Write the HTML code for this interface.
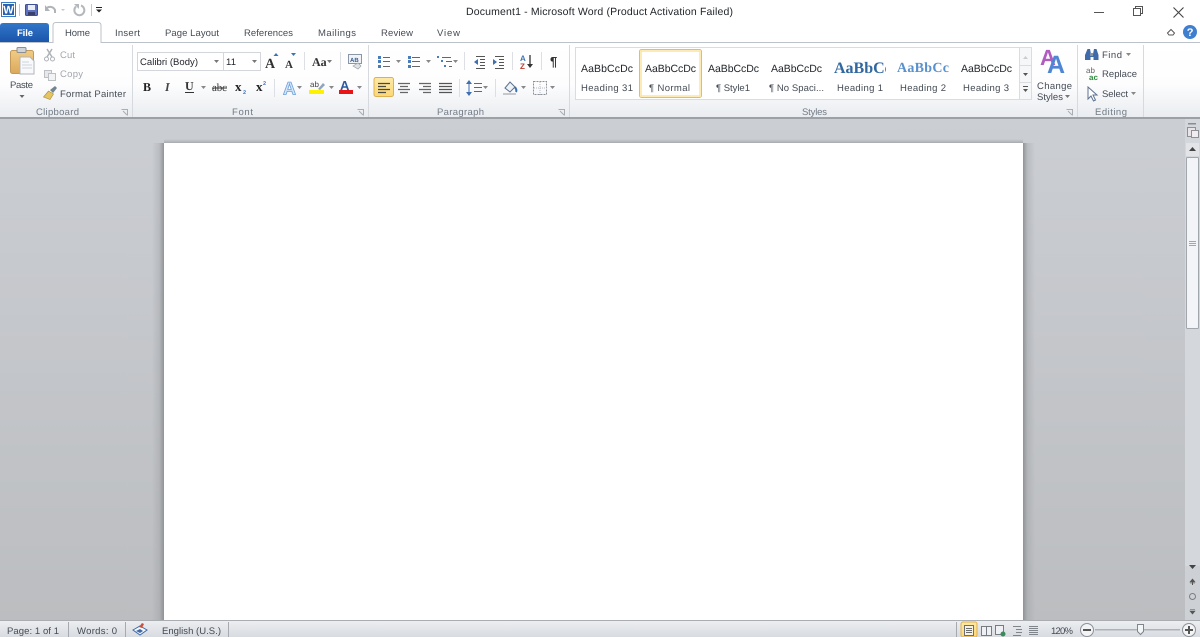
<!DOCTYPE html>
<html lang="en"><head><meta charset="utf-8"><title>Document1 - Microsoft Word</title>
<style>
html,body{margin:0;padding:0;width:1200px;height:637px;overflow:hidden;background:#fff}
svg{display:block;position:absolute;left:0;top:0;filter:blur(.35px)}
text{font-family:"Liberation Sans",sans-serif;font-size:9.5px;fill:#444b54;text-rendering:geometricPrecision}
.g{fill:#727b86}.l{fill:#a3a8ae}.k{fill:#22262b}
</style></head><body>
<svg width="1200" height="637" viewBox="0 0 1200 637" xmlns="http://www.w3.org/2000/svg">
<defs>
<linearGradient id="rib" x1="0" y1="0" x2="0" y2="1"><stop offset="0" stop-color="#fff"/><stop offset=".55" stop-color="#fdfdfe"/><stop offset="1" stop-color="#e9ecf0"/></linearGradient>
<linearGradient id="bg" x1="0" y1="0" x2="0" y2="1"><stop offset="0" stop-color="#cbced3"/><stop offset="1" stop-color="#bbbdc0"/></linearGradient>
<linearGradient id="file" x1="0" y1="0" x2="0" y2="1"><stop offset="0" stop-color="#3276c8"/><stop offset="1" stop-color="#1a55ab"/></linearGradient>
<linearGradient id="st" x1="0" y1="0" x2="0" y2="1"><stop offset="0" stop-color="#eceef1"/><stop offset="1" stop-color="#d8dbe0"/></linearGradient>
<linearGradient id="sel" x1="0" y1="0" x2="0" y2="1"><stop offset="0" stop-color="#fde9a8"/><stop offset="1" stop-color="#fbd776"/></linearGradient>
<linearGradient id="clip" x1="0" y1="0" x2="0" y2="1"><stop offset="0" stop-color="#f0cb86"/><stop offset="1" stop-color="#dba95a"/></linearGradient>
<linearGradient id="shL" x1="0" y1="0" x2="1" y2="0"><stop offset="0" stop-color="#8f9296" stop-opacity="0"/><stop offset=".6" stop-color="#94979a" stop-opacity=".3"/><stop offset="1" stop-color="#8d9093" stop-opacity=".95"/></linearGradient>
<linearGradient id="shR" x1="0" y1="0" x2="1" y2="0"><stop offset="0" stop-color="#8d9093" stop-opacity=".95"/><stop offset=".4" stop-color="#94979a" stop-opacity=".3"/><stop offset="1" stop-color="#8f9296" stop-opacity="0"/></linearGradient>
<linearGradient id="shT" x1="0" y1="0" x2="0" y2="1"><stop offset="0" stop-color="#8f9296" stop-opacity="0"/><stop offset="1" stop-color="#85888c" stop-opacity=".5"/></linearGradient>
<clipPath id="h1c"><rect x="830" y="55" width="56" height="24"/></clipPath>
</defs>

<!-- backgrounds -->
<rect width="1200" height="637" fill="#fff"/>
<rect y="118" width="1200" height="503" fill="url(#bg)"/>
<rect y="43" width="1200" height="74" fill="url(#rib)"/>
<rect y="42" width="1200" height="1" fill="#bcc2c9"/>
<rect y="117" width="1200" height="2" fill="#9da1a6"/>

<!-- page -->
<rect x="152" y="143" width="12" height="478" fill="url(#shL)"/>
<rect x="1023" y="143" width="12" height="478" fill="url(#shR)"/>
<rect x="164" y="139" width="859" height="4" fill="url(#shT)"/>
<rect x="164" y="143" width="859" height="478" fill="#fff"/>

<!-- QAT -->
<rect x="1.500" y="2.500" width="14" height="14" fill="#fff" stroke="#3a7cc4"/>
<rect x="3" y="4" width="11" height="11" fill="#2a62ad"/>
<text x="3.300" y="13.500" style="font-size:11px;font-weight:bold;fill:#fff">W</text>
<rect x="19" y="4" width="1" height="12" fill="#c5c9cf"/>
<rect x="25.500" y="4.500" width="12" height="11" rx="1" fill="#5f72c0" stroke="#3f4f96"/>
<rect x="28" y="5" width="7" height="5" fill="#e8edf6"/><rect x="28" y="12" width="7" height="3" fill="#39406e"/>
<path d="M46 9c2-3 7-3 9 1l0 3" fill="none" stroke="#b0b4b9" stroke-width="2"/><path d="M45 5v6h5z" fill="#b0b4b9"/>
<path d="M61 9l4 0-2 2z" fill="#c3c6ca"/>
<path d="M81 5.500a5 5 0 1 1-5 1" fill="none" stroke="#b4b8bc" stroke-width="2"/><path d="M74 4h5v5z" fill="#b4b8bc"/>
<rect x="91" y="4" width="1" height="12" fill="#c5c9cf"/>
<rect x="96" y="7" width="6" height="1" fill="#222"/><path d="M96 9.500h6l-3 3z" fill="#222"/>
<text x="466" y="15" class="k" style="font-size:10.500px" textLength="267">Document1 - Microsoft Word (Product Activation Failed)</text>

<!-- window buttons -->
<rect x="1094" y="12" width="10" height="1" fill="#555"/>
<path d="M1135.500 8.500v-2h7v7h-2M1133.500 8.500h7v7h-7z" fill="none" stroke="#555"/>
<path d="M1173.500 7.500l10 10M1183.500 7.500l-10 10" fill="none" stroke="#444" stroke-width="1.100"/>
<path d="M1167.500 33l3.500-3.500 3.500 3.500-1.500 2h-4z" fill="none" stroke="#555" stroke-width="1"/>
<circle cx="1190" cy="32" r="7" fill="#3f7fd0"/><text x="1186.700" y="36" style="font-size:11px;font-weight:bold;fill:#fff">?</text>

<!-- tabs -->
<path d="M0 42V26q0-3 3-3h43q3 0 3 3v16z" fill="url(#file)"/>
<text x="17" y="36" style="font-weight:bold;fill:#fff" textLength="16">File</text>
<path d="M53 43V25.500q0-3 3-3h42q3 0 3 3V43" fill="#fff" stroke="#bcc2c9"/>
<text x="65" y="36" textLength="25">Home</text>
<text x="115" y="36" textLength="25">Insert</text>
<text x="165" y="36" textLength="54">Page Layout</text>
<text x="244" y="36" textLength="49">References</text>
<text x="318" y="36" textLength="38">Mailings</text>
<text x="381" y="36" textLength="32">Review</text>
<text x="437" y="36" textLength="23">View</text>

<!-- group separators -->
<g fill="#d6d9de">
<rect x="132" y="45" width="1" height="72"/><rect x="368" y="45" width="1" height="72"/><rect x="569" y="45" width="1" height="72"/><rect x="1077" y="45" width="1" height="72"/><rect x="1143" y="45" width="1" height="72"/>
</g>

<!-- clipboard -->
<rect x="10.500" y="50.500" width="23" height="23" rx="2" fill="url(#clip)" stroke="#c39a58"/>
<rect x="17" y="47.500" width="9" height="5" rx="1" fill="#d0d4d9" stroke="#8a8f96"/>
<path d="M20 57h10l4 4v13H20z" fill="#f7f9fb" stroke="#b0b5bb"/>
<path d="M22 62h7M22 65h10M22 68h10" stroke="#cfd3d8"/>
<text x="10" y="88" textLength="23">Paste</text>
<path d="M19.500 95h5l-2.500 3z" fill="#666"/>
<path d="M47 49l5 8M52 49l-5 8" stroke="#aeb2b7" stroke-width="1.500"/><circle cx="46.500" cy="59" r="2" fill="none" stroke="#aeb2b7"/><circle cx="52.500" cy="59" r="2" fill="none" stroke="#aeb2b7"/>
<text x="60" y="58" class="l" textLength="15">Cut</text>
<rect x="44.500" y="70.500" width="7" height="7" fill="#e6e8eb" stroke="#bcc0c4"/><rect x="48.500" y="73.500" width="7" height="7" fill="#f2f3f5" stroke="#bcc0c4"/>
<text x="60" y="77" class="l" textLength="23">Copy</text>
<path d="M43.500 97l5-6 5 3-3.500 5.500z" fill="#e5c561" stroke="#a88a3a" stroke-width=".6"/><path d="M50 90l5-4 2 2-4 5z" fill="#74848f"/>
<text x="60" y="97" textLength="66">Format Painter</text>
<text x="36" y="115" class="g" textLength="43">Clipboard</text>
<path d="M121.500 109.500h6v6M123 111l4 4" fill="none" stroke="#a9aeb4"/>

<!-- font -->
<rect x="137.500" y="52.500" width="86" height="18" fill="#fff" stroke="#d3d6db"/>
<rect x="223.500" y="52.500" width="37" height="18" fill="#fff" stroke="#d3d6db"/>
<text x="140" y="65" class="k" textLength="58">Calibri (Body)</text>
<text x="226" y="65" class="k" textLength="10">11</text>
<path d="M214 60h5l-2.500 3zM252 60h5l-2.500 3z" fill="#777"/>
<text x="265" y="68" style="font-family:'Liberation Serif',serif;font-size:14px;font-weight:bold;fill:#333">A</text>
<path d="M273.500 56h5l-2.500-3z" fill="#3d70b8"/>
<text x="285" y="68" style="font-family:'Liberation Serif',serif;font-size:11px;font-weight:bold;fill:#333">A</text>
<path d="M291 53h5l-2.500 3z" fill="#3d70b8"/>
<rect x="304" y="52" width="1" height="18" fill="#dcdfe3"/>
<text x="312" y="66" style="font-family:'Liberation Serif',serif;font-size:12px;font-weight:bold;fill:#333">Aa</text>
<path d="M327 60h5l-2.500 3z" fill="#777"/>
<rect x="340" y="52" width="1" height="18" fill="#dcdfe3"/>
<rect x="348.500" y="54.500" width="13" height="9" fill="#f1f3f6" stroke="#8a97a8"/>
<text x="350" y="62" style="font-size:6px;font-weight:bold;fill:#3d5f8f">AB</text>
<path d="M353 66l5-3 3 3-3 3z" fill="#dfe2e6" stroke="#9aa0a7" stroke-width=".7"/>

<text x="143" y="91" style="font-family:'Liberation Serif',serif;font-size:12px;font-weight:bold;fill:#222">B</text>
<text x="165" y="91" style="font-family:'Liberation Serif',serif;font-size:12px;font-style:italic;font-weight:bold;fill:#444">I</text>
<text x="185" y="90" style="font-family:'Liberation Serif',serif;font-size:12px;font-weight:bold;fill:#333">U</text>
<rect x="185" y="92" width="9" height="1" fill="#333"/>
<path d="M201 86h5l-2.500 3z" fill="#888"/>
<text x="212" y="91" style="font-family:'Liberation Serif',serif;font-size:11px;fill:#333" textLength="15">abc</text>
<rect x="212" y="87.500" width="15" height="1" fill="#333"/>
<text x="235" y="91" style="font-family:'Liberation Serif',serif;font-size:13px;font-weight:bold;fill:#222">x</text>
<text x="243" y="94" style="font-size:5.500px;font-weight:bold;fill:#3d70b8">2</text>
<text x="256" y="91" style="font-family:'Liberation Serif',serif;font-size:13px;font-weight:bold;fill:#222">x</text>
<text x="263" y="85" style="font-size:5.500px;font-weight:bold;fill:#3d70b8">2</text>
<rect x="274" y="79" width="1" height="18" fill="#dcdfe3"/>
<text x="283" y="94.500" style="font-size:18px;font-weight:bold;fill:#d7e7f8;stroke:#6ba0dc;stroke-width:.8">A</text>
<path d="M297 86h5l-2.500 3z" fill="#888"/>
<text x="310" y="87" style="font-size:8px;fill:#444">ab</text>
<path d="M318 89l5-6 2 2-5 5z" fill="#8ea4c0"/>
<rect x="309" y="90" width="15" height="4" fill="#fff200"/>
<path d="M329 86h5l-2.500 3z" fill="#888"/>
<text x="340" y="90" style="font-size:13px;font-weight:bold;fill:#2d5a9e">A</text>
<rect x="339" y="90" width="14" height="4" fill="#e81416"/>
<path d="M357 86h5l-2.500 3z" fill="#888"/>
<text x="232" y="115" class="g" textLength="21">Font</text>
<path d="M357.500 109.500h6v6M359 111l4 4" fill="none" stroke="#a9aeb4"/>

<!-- paragraph -->
<g fill="#4a7cbc"><rect x="378" y="56" width="3" height="3"/><rect x="378" y="60" width="3" height="3"/><rect x="378" y="65" width="3" height="3"/></g>
<path d="M383 57.500h7M383 61.500h7M383 66.500h7" stroke="#666"/>
<path d="M396 60h5l-2.500 3z" fill="#888"/>
<g fill="#4a7cbc"><rect x="408" y="56" width="3" height="3"/><rect x="408" y="60" width="3" height="3"/><rect x="408" y="65" width="3" height="3"/></g>
<path d="M412 57.500h8M412 61.500h8M412 66.500h8" stroke="#666"/>
<path d="M426 60h5l-2.500 3z" fill="#888"/>
<g fill="#4a7cbc"><rect x="437" y="56" width="2" height="2"/><rect x="441" y="60" width="2" height="2"/><rect x="444" y="65" width="2" height="2"/></g>
<path d="M442 57.500h9M446 61.500h6M449 66.500h3" stroke="#666"/>
<path d="M453 60h5l-2.500 3z" fill="#888"/>
<rect x="464" y="52" width="1" height="18" fill="#dcdfe3"/>
<path d="M476 56.500h9M480 59.500h5M480 62.500h5M480 65.500h5M476 68.500h9" stroke="#555"/><path d="M478 59l-4 3 4 3z" fill="#3e6fb0"/>
<path d="M495 56.500h9M499 59.500h5M499 62.500h5M499 65.500h5M495 68.500h9" stroke="#555"/><path d="M493 59l4 3-4 3z" fill="#3e6fb0"/>
<rect x="512" y="52" width="1" height="18" fill="#dcdfe3"/>
<text x="520" y="61" style="font-size:8px;font-weight:bold;fill:#3e6fb0">A</text>
<text x="520" y="69" style="font-size:8px;font-weight:bold;fill:#c0392b">Z</text>
<path d="M530 55v12" stroke="#333" stroke-width="1.300"/><path d="M527 64h6l-3 4z" fill="#333"/>
<rect x="541" y="52" width="1" height="18" fill="#dcdfe3"/>
<text x="550" y="66" style="font-size:13px;font-weight:bold;fill:#333">¶</text>

<rect x="374" y="77.500" width="19.500" height="19" rx="2" fill="url(#sel)" stroke="#e0b050"/>
<path d="M378 83.500h12M378 86.500h8M378 89.500h12M378 92.500h8" stroke="#4a4a40" stroke-width="1.200"/>
<path d="M398 83.500h12M400 86.500h8M398 89.500h12M400 92.500h8" stroke="#666" stroke-width="1.200"/>
<path d="M419 83.500h12M423 86.500h8M419 89.500h12M423 92.500h8" stroke="#666" stroke-width="1.200"/>
<path d="M439 83.500h13M439 86.500h13M439 89.500h13M439 92.500h13" stroke="#555" stroke-width="1.200"/>
<rect x="459" y="79" width="1" height="18" fill="#dcdfe3"/>
<path d="M469 81v14" stroke="#3e6fb0"/><path d="M466 84l3-4 3 4zM466 92l3 4 3-4z" fill="#3e6fb0"/>
<path d="M474 83.500h8M474 87.500h8M474 91.500h8" stroke="#666"/>
<path d="M483 86h5l-2.500 3z" fill="#888"/>
<rect x="495" y="79" width="1" height="18" fill="#dcdfe3"/>
<path d="M505 88l5-6 5 5-5 5z" fill="#eef1f5" stroke="#5d7290"/><path d="M515 87c1 2 2 3 1 5" stroke="#3e6fb0" stroke-width="2" fill="none"/>
<rect x="503" y="93" width="13" height="2" fill="#c5c9ce"/>
<path d="M521 86h5l-2.500 3z" fill="#888"/>
<path d="M533.500 81.500h13v13h-13z" fill="none" stroke="#8b9097" stroke-dasharray="2 1"/><path d="M540 82v13M534 88h13" stroke="#b8bcc2" stroke-dasharray="1 1"/>
<path d="M550 86h5l-2.500 3z" fill="#888"/>
<text x="437" y="115" class="g" textLength="47">Paragraph</text>
<path d="M558.500 109.500h6v6M560 111l4 4" fill="none" stroke="#a9aeb4"/>

<!-- styles gallery -->
<rect x="575.500" y="47.500" width="456" height="52" fill="#fff" stroke="#d9dce0"/>
<rect x="1019.500" y="47.500" width="12" height="52" fill="#f6f7f9" stroke="#d9dce0"/>
<path d="M1020 65.500h11M1020 82.500h11" stroke="#d9dce0"/>
<path d="M1023 59l2.500-3 2.500 3z" fill="#c9ccd1"/><path d="M1023 73h5l-2.500 3z" fill="#555"/>
<rect x="1023" y="86" width="5" height="1" fill="#555"/><path d="M1023 89h5l-2.500 3z" fill="#555"/>
<rect x="639.500" y="49.500" width="62" height="48" rx="2" fill="#fff" stroke="#e5bd60"/>
<rect x="641" y="51" width="59" height="45" fill="none" stroke="#fde49a" stroke-width="1.500"/>
<text x="581" y="72" class="k" style="font-size:10.500px" textLength="52">AaBbCcDc</text>
<text x="645" y="72" class="k" style="font-size:10.500px" textLength="51">AaBbCcDc</text>
<text x="708" y="72" class="k" style="font-size:10.500px" textLength="51">AaBbCcDc</text>
<text x="771" y="72" class="k" style="font-size:10.500px" textLength="51">AaBbCcDc</text>
<text x="834" y="73" clip-path="url(#h1c)" style="font-family:'Liberation Serif',serif;font-size:16px;font-weight:bold;fill:#31689f">AaBbCc</text>
<text x="897" y="72" style="font-family:'Liberation Serif',serif;font-size:14px;font-weight:bold;fill:#5a90cc" textLength="52">AaBbCc</text>
<text x="961" y="72" class="k" style="font-size:10.500px" textLength="51">AaBbCcDc</text>
<text x="581" y="91" textLength="52">Heading 31</text>
<text x="649" y="91" textLength="41">¶ Normal</text>
<text x="716" y="91" textLength="34">¶ Style1</text>
<text x="769" y="91" textLength="55">¶ No Spaci...</text>
<text x="837" y="91" textLength="46">Heading 1</text>
<text x="900" y="91" textLength="46">Heading 2</text>
<text x="963" y="91" textLength="46">Heading 3</text>
<text x="802" y="115" class="g" textLength="25">Styles</text>
<text x="1040" y="65" style="font-size:22px;font-weight:bold;fill:#b05cc0">A</text>
<text x="1047" y="73" style="font-size:25px;font-weight:bold;fill:#4f86d3">A</text>
<text x="1037" y="89" textLength="35">Change</text>
<text x="1037" y="100" textLength="26">Styles</text>
<path d="M1065 95h5l-2.500 3z" fill="#777"/>
<path d="M1066.500 109.500h6v6M1068 111l4 4" fill="none" stroke="#a9aeb4"/>

<!-- editing -->
<path d="M1085 60v-5l2.500-6h2.500l1 5h2l1-5h2.500l2 6v5h-5v-3h-3v3z" fill="#3f6ca8"/>
<rect x="1090" y="53" width="3" height="3" fill="#8a94a0"/>
<text x="1102" y="58" textLength="20">Find</text>
<path d="M1126 53h5l-2.500 3z" fill="#888"/>
<text x="1086" y="73" style="font-size:8px;fill:#666">ab</text>
<text x="1089" y="80" style="font-size:8px;font-weight:bold;fill:#2f8c3f">ac</text>
<text x="1102" y="77" textLength="35">Replace</text>
<path d="M1088 87v12l3-3 2.500 5 2-1-2.500-5h4z" fill="#fff" stroke="#5d7290"/>
<text x="1102" y="97" textLength="26">Select</text>
<path d="M1131 92h5l-2.500 3z" fill="#888"/>
<text x="1095" y="115" class="g" textLength="32">Editing</text>

<!-- scrollbar -->
<rect x="1185" y="119" width="15" height="502" fill="#d4d7dc"/>
<rect x="1185" y="566" width="15" height="55" fill="#cdd0d4"/>
<rect x="1188" y="123" width="8" height="1.500" fill="#888d93"/>
<rect x="1187.500" y="127.500" width="8" height="9" fill="#e8e3e6" stroke="#8d9196"/>
<rect x="1191.500" y="130.500" width="7" height="7" fill="#f1ecef" stroke="#8d9196"/>
<rect x="1186" y="143" width="13" height="13" fill="#e2e4e8"/>
<path d="M1189 151h7l-3.500-4z" fill="#444"/>
<rect x="1186.500" y="157.500" width="12" height="171" rx="1" fill="#f2f4f7" stroke="#a2a7ad"/>
<path d="M1189 241.500h7M1189 243.500h7M1189 245.500h7" stroke="#a2a7ad"/>
<path d="M1189 565h7l-3.500 4z" fill="#444"/>
<path d="M1190 582l2.500-3 2.500 3zM1190 583h5" fill="#555" stroke="#555" stroke-width=".6"/><path d="M1192.500 582v3" stroke="#555"/>
<circle cx="1192.500" cy="596.500" r="3" fill="none" stroke="#7b7f85"/>
<path d="M1190 611l2.500 3 2.500-3zM1190 609.500h5" fill="#555" stroke="#555" stroke-width=".6"/>

<!-- status bar -->
<rect y="621" width="1200" height="16" fill="url(#st)"/>
<rect y="620" width="1200" height="1" fill="#a9acb1"/>
<text x="7" y="634" textLength="52">Page: 1 of 1</text>
<text x="77" y="634" textLength="40">Words: 0</text>
<text x="162" y="634" textLength="59">English (U.S.)</text>
<g fill="#a6aab0"><rect x="68" y="622" width="1" height="15"/><rect x="125" y="622" width="1" height="15"/><rect x="228" y="622" width="1" height="15"/><rect x="956" y="622" width="1" height="15"/></g>
<path d="M133 630l7-4 7 4-7 5z" fill="#f6f7f9" stroke="#3f6ca8"/>
<path d="M139 627l3-4 2 1-2 4z" fill="#c9503f"/><path d="M136 631l4-2 3 2-3 2z" fill="#3f6ca8"/>
<rect x="961" y="622" width="16" height="15" rx="2" fill="url(#sel)" stroke="#e0b050"/>
<rect x="964.500" y="625.500" width="9" height="10" fill="#f6f2dd" stroke="#6c6f72"/><path d="M966 628.500h6M966 630.500h6M966 632.500h6" stroke="#6c6f72"/>
<path d="M981.500 626.500h5v9h-5zM986.500 626.500h5v9h-5z" fill="#eef0f3" stroke="#777c82"/>
<rect x="995.500" y="625.500" width="8" height="9" fill="#eef0f3" stroke="#777c82"/><circle cx="1003" cy="634" r="2.500" fill="#3a8b5c"/>
<path d="M1013 626.500h8M1016 629.500h6M1016 632.500h6M1013 635.500h8" stroke="#80858b"/>
<path d="M1029 626.500h9M1029 628.500h9M1029 630.500h9M1029 632.500h9M1029 634.500h9" stroke="#80858b"/>
<text x="1051" y="634" textLength="22">120%</text>
<rect x="1095" y="629" width="85" height="1.500" fill="#aeb2b8"/>
<rect x="1138" y="627" width="1" height="6" fill="#a2a6ac"/>
<circle cx="1087" cy="630" r="6.500" fill="#f3f4f6" stroke="#8d9198"/><rect x="1083" y="629" width="8" height="2" fill="#555"/>
<circle cx="1189" cy="630" r="6.500" fill="#f3f4f6" stroke="#8d9198"/><path d="M1185 630h8M1189 626v8" stroke="#555" stroke-width="2"/>
<path d="M1137.500 624.500h6v7l-3 3-3-3z" fill="#f4f5f7" stroke="#80858b"/>
</svg>
</body></html>
